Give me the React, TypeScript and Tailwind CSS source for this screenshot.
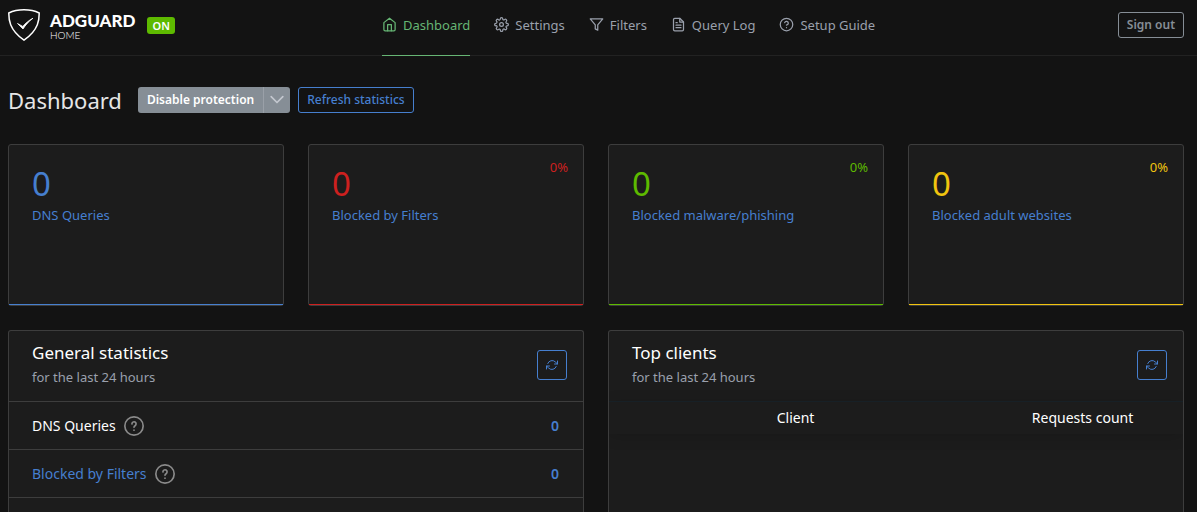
import type { ReactNode } from "react";

type IconProps = { children: ReactNode; className?: string };

function Icon({ children, className = "w-4 h-4" }: IconProps) {
  return (
    <svg
      className={className}
      viewBox="0 0 24 24"
      fill="none"
      stroke="currentColor"
      strokeWidth="2"
      strokeLinecap="round"
      strokeLinejoin="round"
      aria-hidden="true"
    >
      {children}
    </svg>
  );
}

const navItems = [
  {
    label: "Dashboard",
    active: true,
    icon: (
      <>
        <path d="M3 9l9-7 9 7v11a2 2 0 0 1-2 2H5a2 2 0 0 1-2-2z" />
        <path d="M9 22V12h6v10" />
      </>
    ),
  },
  {
    label: "Settings",
    icon: (
      <>
        <circle cx="12" cy="12" r="3" />
        <path d="M19.4 15a1.65 1.65 0 0 0 .33 1.82l.06.06a2 2 0 0 1-2.83 2.83l-.06-.06a1.65 1.65 0 0 0-2.8 1.17V21a2 2 0 0 1-4 0v-.09A1.65 1.65 0 0 0 9 19.4a1.65 1.65 0 0 0-1.82.33l-.06.06a2 2 0 0 1-2.83-2.83l.06-.06A1.65 1.65 0 0 0 3.09 14H3a2 2 0 0 1 0-4h.09A1.65 1.65 0 0 0 4.6 9a1.65 1.65 0 0 0-.33-1.82l-.06-.06a2 2 0 0 1 2.83-2.83l.06.06A1.65 1.65 0 0 0 10 3.09V3a2 2 0 0 1 4 0v.09a1.65 1.65 0 0 0 2.82 1.18l.06-.06a2 2 0 0 1 2.83 2.83l-.06.06A1.65 1.65 0 0 0 20.91 10H21a2 2 0 0 1 0 4h-.09a1.65 1.65 0 0 0-1.51 1z" />
      </>
    ),
  },
  {
    label: "Filters",
    icon: <path d="M22 3H2l8 9.46V19l4 2v-8.54z" />,
  },
  {
    label: "Query Log",
    icon: (
      <>
        <path d="M14 2H6a2 2 0 0 0-2 2v16a2 2 0 0 0 2 2h12a2 2 0 0 0 2-2V8z" />
        <path d="M14 2v6h6M16 13H8M16 17H8M10 9H8" />
      </>
    ),
  },
  {
    label: "Setup Guide",
    icon: (
      <>
        <circle cx="12" cy="12" r="10" />
        <path d="M9.09 9a3 3 0 0 1 5.83 1c0 2-3 3-3 3M12 17v.01" />
      </>
    ),
  },
];

const statCards = [
  {
    label: "DNS Queries",
    count: 0,
    color: "text-[#467fcf]",
    line: "bg-[#467fcf]",
  },
  {
    label: "Blocked by Filters",
    count: 0,
    percent: 0,
    color: "text-[#cd201f]",
    line: "bg-[#cd201f]",
  },
  {
    label: "Blocked malware/phishing",
    count: 0,
    percent: 0,
    color: "text-[#5eba00]",
    line: "bg-[#5eba00]",
  },
  {
    label: "Blocked adult websites",
    count: 0,
    percent: 0,
    color: "text-[#f1c40f]",
    line: "bg-[#f1c40f]",
  },
];

const generalRows = [
  { label: "DNS Queries", value: 0 },
  { label: "Blocked by Filters", value: 0, link: true },
];

function Header() {
  return (
    <header className="h-14 shrink-0 pl-2 pr-[13px] border-b border-[#222] grid grid-cols-[374px_1fr_auto]">
      <div className="flex items-center pb-1.5">
        <a href="#home" className="flex items-center gap-2.5">
          <svg
            className="w-8 h-8"
            viewBox="0 0 32 32"
            fill="none"
            stroke="#fff"
            aria-hidden="true"
          >
            <path
              d="M16 .8C11 .8 5 1.9.8 4 .8 8.8.3 20.5 16 31.2 31.7 20.5 31.2 8.8 31.2 4 27 1.9 21 .8 16 .8z"
              strokeWidth="1.5"
            />
            <path
              d="M9.5 14.5l5.5 5.500c2.5-4 5.5-7.5 10-10.800-4 2-7.500 5-10.200 8.200z"
              fill="#fff"
              strokeWidth=".8"
            />
          </svg>
          <span className="flex flex-col pt-1 text-white font-['Lato']">
            <span className="text-[17px] leading-4 font-black">ADGUARD</span>
            <span className="text-[10px] leading-3 font-light">HOME</span>
          </span>
        </a>
        <span className="ml-3 px-[5px] rounded-[3px] bg-[#5eba00] text-white text-[11px] leading-[17px] font-semibold">
          ON
        </span>
      </div>
      <nav className="flex gap-6">
        {navItems.map((item) => (
          <a
            key={item.label}
            href={`#${item.label}`}
            className={
              item.active
                ? "h-14 pb-1.5 flex items-center gap-[6px] border-b border-[#66b574] text-[#66b574]"
                : "h-14 pb-1.5 flex items-center gap-[6px] border-b border-transparent text-[#9aa0ac]"
            }
          >
            <Icon className="w-[15px] h-[15px]">{item.icon}</Icon>
            <span className="text-[13px] leading-5">{item.label}</span>
          </a>
        ))}
      </nav>
      <div className="flex items-center pb-1.5">
        <button className="h-[26px] px-2 rounded-[3px] border border-[#868e96] text-xs font-semibold text-[#868e96]">
          Sign out
        </button>
      </div>
    </header>
  );
}

function StatCard({ card }: { card: (typeof statCards)[number] }) {
  return (
    <div className="relative h-[162px] px-[23px] pt-[18px] rounded-[3px] border border-[#3d3d3d] bg-[#1c1c1c]">
      <div className={`text-[33px] leading-[42px] ${card.color}`}>
        {card.count}
      </div>
      <a href="#queries" className="block text-[13px] leading-5 text-[#467fcf]">
        {card.label}
      </a>
      {card.percent !== undefined && (
        <div
          className={`absolute top-3 right-[15px] text-[13px] leading-5 ${card.color}`}
        >
          {card.percent}%
        </div>
      )}
      <div className={`absolute inset-x-0 bottom-0 h-px ${card.line}`} />
    </div>
  );
}

function CardHeader({ title }: { title: string }) {
  return (
    <div className="h-[70px] pb-0.5 pl-[23px] pr-4 flex items-center justify-between">
      <div>
        <h3 className="text-[17px] leading-6 text-white">{title}</h3>
        <div className="text-[13px] leading-6 text-[#9aa0ac]">
          for the last 24 hours
        </div>
      </div>
      <button
        aria-label={`Refresh ${title}`}
        className="w-[30px] h-[30px] flex items-center justify-center rounded-[3px] border border-[#467fcf] text-[#467fcf]"
      >
        <Icon className="w-3 h-3">
          <path d="M23 4v6h-6M1 20v-6h6" />
          <path d="M3.51 9a9 9 0 0 1 14.85-3.36L23 10M1 14l4.64 4.36A9 9 0 0 0 20.49 15" />
        </Icon>
      </button>
    </div>
  );
}

export default function App() {
  return (
    <div className="h-screen overflow-hidden flex flex-col bg-[#131313] font-['Noto_Sans',sans-serif]">
      <Header />
      <main className="flex-1 flex flex-col pl-2 pr-[13px]">
        {/* Page title and actions */}
        <div className="h-[88px] shrink-0 flex items-center">
          <h1 className="mr-4 text-[22px] leading-9 text-[#e6e6e6]">
            Dashboard
          </h1>
          <div className="h-[26px] mr-2 flex rounded-[3px] overflow-hidden bg-[#868e96]">
            <button className="px-[9px] text-xs font-semibold text-white">
              Disable protection
            </button>
            <button
              aria-label="Protection options"
              className="w-[27px] flex items-center justify-center border-l border-[#9aa0a8] text-[#c3c7cf]"
            >
              <Icon className="w-5 h-5">
                <path d="M5 8l7 7 7-7" />
              </Icon>
            </button>
          </div>
          <button className="h-[26px] px-2 rounded-[3px] border border-[#467fcf] text-xs font-medium text-[#467fcf]">
            Refresh statistics
          </button>
        </div>

        <div className="grid grid-cols-4 gap-6 mb-6">
          {statCards.map((card) => (
            <StatCard key={card.label} card={card} />
          ))}
        </div>

        <div className="flex-1 grid grid-cols-2 gap-6">
          <section className="overflow-hidden rounded-t-[3px] border border-b-0 border-[#3d3d3d] bg-[#1c1c1c]">
            <CardHeader title="General statistics" />
            <table className="w-full text-sm">
              <tbody>
                {generalRows.map((row) => (
                  <tr key={row.label} className="h-12 border-y border-[#3d3d3d]">
                    <td className="pl-[23px]">
                      <div className="flex items-center gap-2">
                        {row.link ? (
                          <a href="#filters" className="text-[#467fcf]">
                            {row.label}
                          </a>
                        ) : (
                          <span className="text-white">{row.label}</span>
                        )}
                        <Icon className="w-5 h-5 text-[#8a8a8a]">
                          <circle cx="12" cy="12" r="11" />
                          <path d="M9.5 9.5a2.5 2.5 0 1 1 3.8 2.1c-.8.5-1.3 1-1.3 2M12 17v.01" />
                        </Icon>
                      </div>
                    </td>
                    <td className="pr-6 text-right font-semibold text-[#467fcf]">
                      {row.value}
                    </td>
                  </tr>
                ))}
              </tbody>
            </table>
          </section>

          <section className="overflow-hidden rounded-t-[3px] border border-b-0 border-[#3d3d3d] bg-[#1c1c1c]">
            <CardHeader title="Top clients" />
            <table className="w-full table-fixed text-sm text-white">
              <thead>
                <tr className="h-8 border-t border-[#172026] shadow-[0_2px_15px_0_rgba(0,0,0,0.15)]">
                  <th className="w-[65%] font-normal">Client</th>
                  <th className="font-normal">Requests count</th>
                </tr>
              </thead>
            </table>
          </section>
        </div>
      </main>
    </div>
  );
}
